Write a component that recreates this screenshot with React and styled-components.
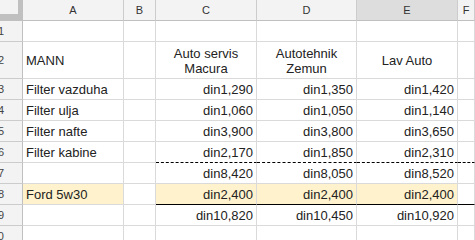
import React from "react";
import styled, { createGlobalStyle } from "styled-components";

const GlobalStyle = createGlobalStyle`
  html, body {
    margin: 0;
    padding: 0;
    background: #fff;
    overflow: hidden;
  }
`;

const Sheet = styled.div`
  display: grid;
  grid-template-columns: 23px 101px 32px 101px 100px 101px 1fr;
  grid-template-rows: 21px 21px 37px repeat(9, 21px);
  width: 475px;
  height: 240px;
  overflow: hidden;
  font-family: "Liberation Sans", Arial, sans-serif;
`;

const Corner = styled.div`
  box-sizing: border-box;
  background: #f3f3f3;
  border-right: 5px solid #c0c0c0;
  border-bottom: 7px solid #c0c0c0;
`;

const ColHeader = styled.div`
  box-sizing: border-box;
  display: flex;
  align-items: center;
  justify-content: center;
  background: ${(p) => (p.$selected ? "#dddddd" : "#f3f3f3")};
  border-right: 1px solid #cccccc;
  border-bottom: 1px solid #c0c0c0;
  font-size: 11px;
  color: #333;
`;

const RowHeader = styled.div`
  box-sizing: border-box;
  display: flex;
  align-items: center;
  justify-content: flex-end;
  padding-right: 18px;
  overflow: hidden;
  background: #f3f3f3;
  border-right: 1px solid #c0c0c0;
  border-bottom: 1px solid #cccccc;
  font-size: 11px;
  color: #444;
  white-space: nowrap;
`;

const Cell = styled.div`
  box-sizing: border-box;
  display: flex;
  align-items: center;
  justify-content: ${(p) =>
    p.$align === "right" ? "flex-end" : p.$align === "center" ? "center" : "flex-start"};
  text-align: ${(p) => p.$align || "left"};
  padding: 1px 3px 0 3px;
  background: ${(p) => (p.$hl ? "#fff2cc" : "#fff")};
  border-right: 1px solid #dadada;
  border-bottom: ${(p) =>
    p.$line === "dashed"
      ? "1px dashed #000"
      : p.$line === "solid"
      ? "1px solid #000"
      : "1px solid #dadada"};
  font-size: 13px;
  line-height: 15px;
  color: #222;
  white-space: ${(p) => (p.$wrap ? "normal" : "nowrap")};
  overflow: hidden;
`;

const letters = ["A", "B", "C", "D", "E", "F"];

const rows = [
  { n: 1, cells: ["", "", "", "", "", ""] },
  { n: 2, cells: ["MANN", "", "Auto servis Macura", "Autotehnik Zemun", "Lav Auto", ""], head: true },
  { n: 3, cells: ["Filter vazduha", "", "din1,290", "din1,350", "din1,420", ""] },
  { n: 4, cells: ["Filter ulja", "", "din1,060", "din1,050", "din1,140", ""] },
  { n: 5, cells: ["Filter nafte", "", "din3,900", "din3,800", "din3,650", ""] },
  { n: 6, cells: ["Filter kabine", "", "din2,170", "din1,850", "din2,310", ""], line: "dashed" },
  { n: 7, cells: ["", "", "din8,420", "din8,050", "din8,520", ""] },
  { n: 8, cells: ["Ford 5w30", "", "din2,400", "din2,400", "din2,400", ""], hl: true, line: "solid" },
  { n: 9, cells: ["", "", "din10,820", "din10,450", "din10,920", ""] },
  { n: 10, cells: ["", "", "", "", "", ""] },
  { n: 11, cells: ["", "", "", "", "", ""] },
];

function App() {
  return (
    <>
      <GlobalStyle />
      <Sheet>
        <Corner />
        {letters.map((l) => (
          <ColHeader key={l} $selected={l === "E"}>
            {l}
          </ColHeader>
        ))}
        {rows.map((row) => (
          <React.Fragment key={row.n}>
            <RowHeader>{row.n}</RowHeader>
            {row.cells.map((text, i) => {
              const isText = i === 0;
              const align = row.head && i > 1 ? "center" : isText ? "left" : "right";
              return (
                <Cell
                  key={i}
                  $align={align}
                  $wrap={row.head}
                  $hl={row.hl && i !== 1 && i !== 5}
                  $line={row.line && i >= 2 ? row.line : undefined}
                >
                  {text}
                </Cell>
              );
            })}
          </React.Fragment>
        ))}
      </Sheet>
    </>
  );
}

export default App;
